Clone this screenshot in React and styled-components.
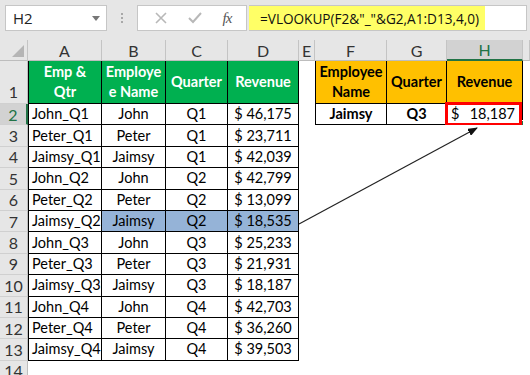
import React from 'react';
import styled, { createGlobalStyle } from 'styled-components';

const GlobalStyle = createGlobalStyle`
    body {
        margin: 0;
        background: #fff;
        font-family: Lato, "Liberation Sans", sans-serif;
    }
`;

const COLS = '28px 74px 64px 62px 71px 16px 72px 60px 76px 7px';
const ROW_H = 21.4;

const Page = styled.div`
    position: relative;
    width: 530px;
    height: 375px;
    overflow: hidden;
    background: #fff;
`;

const FormulaBar = styled.div`
    height: 40px;
    box-sizing: border-box;
    padding: 5px 3px 9px 5px;
    background: #e6e6e6;
    display: flex;
    align-items: stretch;
`;

const NameBox = styled.div`
    width: 102px;
    box-sizing: border-box;
    background: #fff;
    border: 1px solid #c6c6c6;
    display: flex;
    align-items: center;
    justify-content: space-between;
    padding: 0 6px 0 7px;
    font-family: "Open Sans", "Noto Sans", sans-serif;
    font-size: 15px;
    color: #222;
`;

const Caret = styled.span`
    width: 0;
    height: 0;
    border-left: 4px solid transparent;
    border-right: 4px solid transparent;
    border-top: 5px solid #777;
`;

const Grip = styled.div`
    width: 30px;
    display: flex;
    flex-direction: column;
    align-items: center;
    justify-content: center;
    gap: 2px;
    span {
        width: 2px;
        height: 2px;
        background: #a8a8a8;
    }
`;

const IconBox = styled.div`
    width: 110px;
    box-sizing: border-box;
    background: #fff;
    border: 1px solid #c6c6c6;
    display: flex;
    align-items: center;
    justify-content: space-around;
    padding: 0 4px 0 6px;
`;

const FxMark = styled.span`
    font-family: "Liberation Serif", serif;
    font-style: italic;
    font-size: 15px;
    color: #555;
    letter-spacing: -1px;
`;

const FormulaField = styled.div`
    flex: 1;
    margin-left: 2px;
    background: #fff;
    border: 1px solid #c6c6c6;
    border-left: none;
    display: flex;
`;

const Highlight = styled.div`
    width: 236px;
    background: #ffff66;
    display: flex;
    align-items: center;
    padding-left: 11px;
    box-sizing: border-box;
    font-family: "Open Sans", "Noto Sans", sans-serif;
    font-size: 13.6px;
    color: #111;
    white-space: nowrap;
`;

const GridRow = styled.div`
    display: grid;
    grid-template-columns: ${COLS};
    height: ${({ $h }) => $h}px;
`;

const ColHead = styled.div`
    box-sizing: border-box;
    background: ${({ $sel }) => ($sel ? '#d2d2d2' : '#e6e6e6')};
    color: ${({ $sel }) => ($sel ? '#217346' : '#333')};
    border-right: 1px solid #c4c4c4;
    border-bottom: ${({ $sel }) => ($sel ? '2px solid #217346' : '1px solid #bdbdbd')};
    display: flex;
    align-items: center;
    justify-content: center;
    font-size: 16px;
`;

const Corner = styled(ColHead)`
    position: relative;
    &::after {
        content: '';
        position: absolute;
        right: 3px;
        bottom: 3px;
        width: 0;
        height: 0;
        border-left: 12px solid transparent;
        border-bottom: 12px solid #b5b5b5;
    }
`;

const RowHead = styled.div`
    box-sizing: border-box;
    background: ${({ $sel }) => ($sel ? '#d2d2d2' : '#e6e6e6')};
    color: ${({ $sel }) => ($sel ? '#217346' : '#333')};
    border-right: ${({ $sel }) => ($sel ? '2px solid #217346' : '1px solid #bdbdbd')};
    border-bottom: 1px solid #d0d0d0;
    display: flex;
    align-items: ${({ $bottom }) => ($bottom ? 'flex-end' : 'center')};
    justify-content: center;
    padding-bottom: ${({ $bottom }) => ($bottom ? '2px' : '0')};
    font-size: 16px;
`;

const Cell = styled.div`
    position: relative;
    box-sizing: border-box;
    background: ${({ $bg }) => $bg || '#fff'};
    color: ${({ $color }) => $color || '#000'};
    font-weight: ${({ $bold }) => ($bold ? 700 : 400)};
    font-size: 14.5px;
    line-height: 20px;
    border-right: ${({ $boxed }) => ($boxed ? '1px solid #000' : 'none')};
    border-bottom: ${({ $boxed }) => ($boxed ? '1px solid #000' : 'none')};
    border-left: ${({ $first }) => ($first ? '1px solid #000' : 'none')};
    display: flex;
    align-items: center;
    justify-content: ${({ $align }) => $align || 'center'};
    text-align: center;
    padding: 0 ${({ $pad }) => $pad ?? 2}px;
    white-space: ${({ $wrap }) => ($wrap ? 'normal' : 'nowrap')};
    word-break: ${({ $breakAll }) => ($breakAll ? 'break-all' : 'normal')};
    overflow: visible;
`;

const Accounting = styled.div`
    width: 100%;
    display: flex;
    justify-content: space-between;
    padding: 0 7px 0 4px;
`;

const RedBox = styled.div`
    position: absolute;
    top: -2px;
    left: -2px;
    right: 0;
    bottom: -2px;
    border: 3px solid #ff0000;
    pointer-events: none;
`;

const FillHandle = styled.div`
    position: absolute;
    right: -3px;
    bottom: -3px;
    width: 5px;
    height: 5px;
    background: #217346;
    border: 1px solid #fff;
`;

const ArrowLayer = styled.svg`
    position: absolute;
    left: 0;
    top: 0;
    pointer-events: none;
`;

const data = [
    ['John_Q1', 'John', 'Q1', '$ 46,175'],
    ['Peter_Q1', 'Peter', 'Q1', '$ 23,711'],
    ['Jaimsy_Q1', 'Jaimsy', 'Q1', '$ 42,039'],
    ['John_Q2', 'John', 'Q2', '$ 42,799'],
    ['Peter_Q2', 'Peter', 'Q2', '$ 13,099'],
    ['Jaimsy_Q2', 'Jaimsy', 'Q2', '$ 18,535'],
    ['John_Q3', 'John', 'Q3', '$ 25,233'],
    ['Peter_Q3', 'Peter', 'Q3', '$ 21,931'],
    ['Jaimsy_Q3', 'Jaimsy', 'Q3', '$ 18,187'],
    ['John_Q4', 'John', 'Q4', '$ 42,703'],
    ['Peter_Q4', 'Peter', 'Q4', '$ 36,260'],
    ['Jaimsy_Q4', 'Jaimsy', 'Q4', '$ 39,503'],
];

const GREEN = '#00b050';
const ORANGE = '#ffc000';
const BLUE = '#95b3d7';

const App = () => (
    <Page>
        <GlobalStyle />
        <FormulaBar>
            <NameBox>
                H2
                <Caret />
            </NameBox>
            <Grip>
                <span />
                <span />
                <span />
            </Grip>
            <IconBox>
                <svg width="12" height="12" viewBox="0 0 12 12">
                    <path d="M1 1 L11 11 M11 1 L1 11" stroke="#b8b8b8" strokeWidth="1.6" />
                </svg>
                <svg width="14" height="12" viewBox="0 0 14 12">
                    <path d="M1 6 L5 10 L13 1" stroke="#b8b8b8" strokeWidth="2" fill="none" />
                </svg>
                <FxMark>fx</FxMark>
            </IconBox>
            <FormulaField>
                <Highlight>=VLOOKUP(F2&amp;"_"&amp;G2,A1:D13,4,0)</Highlight>
            </FormulaField>
        </FormulaBar>

        <GridRow $h={21}>
            <Corner />
            {['A', 'B', 'C', 'D', 'E', 'F', 'G', 'H', ''].map((c) => (
                <ColHead key={c || 'I'} $sel={c === 'H'}>{c}</ColHead>
            ))}
        </GridRow>

        <GridRow $h={43}>
            <RowHead $bottom>1</RowHead>
            <Cell $bg={GREEN} $color="#fff" $bold $boxed $first $wrap>Emp &amp; Qtr</Cell>
            <Cell $bg={GREEN} $color="#fff" $bold $boxed $wrap $breakAll>Employee Name</Cell>
            <Cell $bg={GREEN} $color="#fff" $bold $boxed>Quarter</Cell>
            <Cell $bg={GREEN} $color="#fff" $bold $boxed>Revenue</Cell>
            <Cell />
            <Cell $bg={ORANGE} $bold $boxed $first $wrap>Employee Name</Cell>
            <Cell $bg={ORANGE} $bold $boxed>Quarter</Cell>
            <Cell $bg={ORANGE} $bold $boxed>Revenue</Cell>
            <Cell />
        </GridRow>

        {data.map((r, i) => {
            const n = i + 2;
            const hl = n === 7 ? BLUE : undefined;
            return (
                <GridRow key={n} $h={ROW_H}>
                    <RowHead $sel={n === 2}>{n}</RowHead>
                    <Cell $boxed $first $align="flex-start" $pad={3}>{r[0]}</Cell>
                    <Cell $boxed $bg={hl}>{r[1]}</Cell>
                    <Cell $boxed $bg={hl}>{r[2]}</Cell>
                    <Cell $boxed $bg={hl}>{r[3]}</Cell>
                    <Cell />
                    {n === 2 ? (
                        <>
                            <Cell $boxed $first $bold>Jaimsy</Cell>
                            <Cell $boxed $bold>Q3</Cell>
                            <Cell $boxed $pad={0}>
                                <Accounting>
                                    <span>$</span>
                                    <span>18,187</span>
                                </Accounting>
                                <FillHandle />
                                <RedBox />
                            </Cell>
                        </>
                    ) : (
                        <>
                            <Cell />
                            <Cell />
                            <Cell />
                        </>
                    )}
                    <Cell />
                </GridRow>
            );
        })}

        <GridRow $h={ROW_H}>
            <RowHead>14</RowHead>
        </GridRow>

        <ArrowLayer width="530" height="375" viewBox="0 0 530 375">
            <defs>
                <marker id="head" markerWidth="10" markerHeight="8" refX="9" refY="4" orient="auto" markerUnits="userSpaceOnUse">
                    <path d="M0 0 L10 4 L0 8 Z" fill="#111" />
                </marker>
            </defs>
            <line x1="299" y1="224" x2="477" y2="128" stroke="#222" strokeWidth="1.2" markerEnd="url(#head)" />
        </ArrowLayer>
    </Page>
);

export default App;
